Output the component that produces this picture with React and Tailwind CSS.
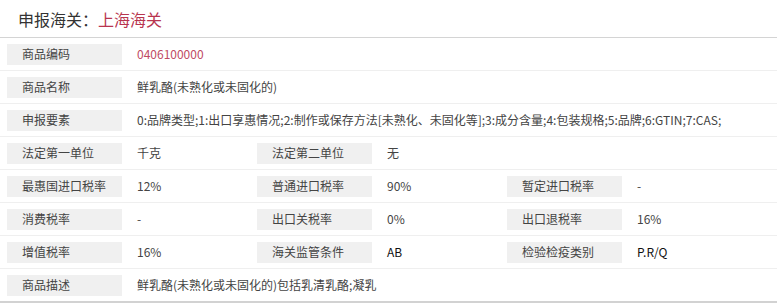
const rows = [
  { full: ["商品编码", "0406100000"], red: true },
  { full: ["商品名称", "鲜乳酪(未熟化或未固化的)"] },
  { full: ["申报要素", "0:品牌类型;1:出口享惠情况;2:制作或保存方法[未熟化、未固化等];3:成分含量;4:包装规格;5:品牌;6:GTIN;7:CAS;"] },
  { pairs: [["法定第一单位", "千克"], ["法定第二单位", "无"]] },
  { pairs: [["最惠国进口税率", "12%"], ["普通进口税率", "90%"], ["暂定进口税率", "-"]] },
  { pairs: [["消费税率", "-"], ["出口关税率", "0%"], ["出口退税率", "16%"]] },
  { pairs: [["增值税率", "16%"], ["海关监管条件", "AB", true], ["检验检疫类别", "P.R/Q", true]] },
  { full: ["商品描述", "鲜乳酪(未熟化或未固化的)包括乳清乳酪;凝乳"], last: true },
];

function Label({ children }) {
  return (
    <div className="w-[115px] h-[21px] shrink-0 bg-[#f0f0f0] pl-[15px] flex items-center">
      {children}
    </div>
  );
}

export default function App() {
  return (
    <div className="w-[782px] h-[308px] bg-white text-[12px] text-[#444] font-['Noto_Sans_CJK_SC',sans-serif]">
      <div className="w-[777px]">
        <div className="h-[38px] flex items-center pl-[18px] border-b border-[#d4d4d4] text-[16px] text-[#333]">
          申报海关：<span className="text-[#b8354f]">上海海关</span>
        </div>

        {rows.map((r, i) => (
          <div
            key={i}
            className={
              r.last
                ? "h-[34px] flex items-center pl-[7px] border-b-2 border-[#d2d2d2]"
                : "h-[33px] flex items-center pl-[7px] border-b border-[#efefef]"
            }>
            {r.full ? (
              <>
                <Label>{r.full[0]}</Label>
                <div className={r.red ? "pl-[15px] text-[#c04a63]" : "pl-[15px]"}>{r.full[1]}</div>
              </>
            ) : (
              r.pairs.map((p, j) => (
                <div key={j} className="w-[250px] flex items-center">
                  <Label>{p[0]}</Label>
                  <div className={p[2] ? "pl-[15px] text-[#111]" : "pl-[15px]"}>{p[1]}</div>
                </div>
              ))
            )}
          </div>
        ))}
      </div>
    </div>
  );
}
